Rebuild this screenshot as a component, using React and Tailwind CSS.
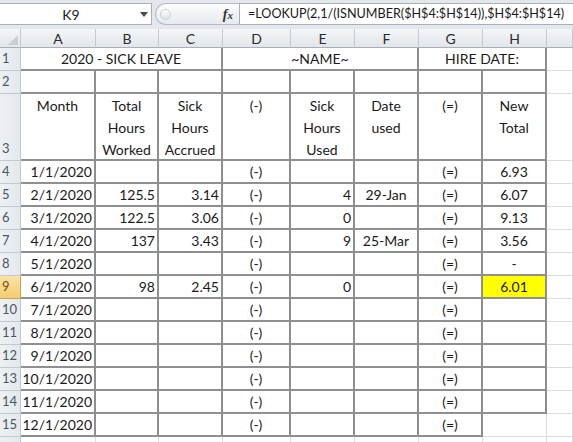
import React from "react";

const TB = "border-r-2 border-b-2 border-[#8f8f8f]";
const GL = "border-r border-b border-[#dadcdd]";

const rows = [
  { a: "1/1/2020", b: "", c: "", e: "", f: "", h: "6.93" },
  { a: "2/1/2020", b: "125.5", c: "3.14", e: "4", f: "29-Jan", h: "6.07" },
  { a: "3/1/2020", b: "122.5", c: "3.06", e: "0", f: "", h: "9.13" },
  { a: "4/1/2020", b: "137", c: "3.43", e: "9", f: "25-Mar", h: "3.56" },
  { a: "5/1/2020", b: "", c: "", e: "", f: "", h: "-" },
  { a: "6/1/2020", b: "98", c: "2.45", e: "0", f: "", h: "6.01", hl: true },
  { a: "7/1/2020", b: "", c: "", e: "", f: "", h: "" },
  { a: "8/1/2020", b: "", c: "", e: "", f: "", h: "" },
  { a: "9/1/2020", b: "", c: "", e: "", f: "", h: "" },
  { a: "10/1/2020", b: "", c: "", e: "", f: "", h: "" },
  { a: "11/1/2020", b: "", c: "", e: "", f: "", h: "" },
  { a: "12/1/2020", b: "", c: "", e: "", f: "", h: "", last: true },
];

function RowHead({ n, active, bottom }) {
  return (
    <div
      className={`flex ${bottom ? "items-end pb-[2px]" : "items-center"} pl-[2px] text-[13px] border-r border-b ${
        active
          ? "bg-linear-to-b from-[#fbe3a6] to-[#f5cc72] border-[#c9a24e] text-[#7a5200]"
          : "bg-linear-to-r from-[#eef1f4] to-[#e4e8ec] border-[#c3c8ce] text-[#4b5563]"
      }`}
    >
      {n}
    </div>
  );
}

function ColHead({ children }) {
  return (
    <div className="flex items-center justify-center text-[14px] text-[#2b2b2b] bg-linear-to-b from-[#f4f6f8] to-[#e2e6ea] border-r border-b border-r-[#c6cacf] border-b-[#a9afb6]">
      {children}
    </div>
  );
}

function Cell({ b = TB, align = "justify-end", className = "", children }) {
  return (
    <div className={`${b} flex items-center ${align} px-[2px] whitespace-nowrap overflow-hidden ${className}`}>
      {children}
    </div>
  );
}

export default function App() {
  return (
    <div
      className="w-[573px] h-[442px] overflow-hidden bg-white text-[14px] text-[#1a1a1a]"
      style={{ fontFamily: "Lato, 'Open Sans', sans-serif" }}
    >
      {/* formula bar */}
      <div className="h-[29px] bg-[#e4e8ed] flex items-start pt-[3px]">
        <div className="w-[152px] h-[22px] bg-white border border-l-0 border-[#a7afb9] flex items-center">
          <span className="flex-1 text-center pl-[2px]">K9</span>
          <svg width="8" height="5" viewBox="0 0 8 5" className="mr-[3px]">
            <path d="M0 0h8L4 5z" fill="#4a4a4a" />
          </svg>
        </div>
        <div className="ml-[3px] w-[84px] h-[22px] rounded-l-full border border-r-0 border-[#b3bac3] bg-linear-to-b from-[#fbfcfd] to-[#e6eaee] flex items-center">
          <span className="ml-[4px] w-[11px] h-[11px] rounded-full border border-[#c9ced4] bg-linear-to-b from-white to-[#dde2e7]" />
          <span
            className="ml-auto mr-[6px] italic text-[14px] font-semibold text-[#333]"
            style={{ fontFamily: "'Liberation Serif', serif" }}
          >
            f<span className="text-[11px]">x</span>
          </span>
        </div>
        <div className="flex-1 h-[22px] bg-white border border-r-0 border-[#a7afb9] flex items-center pl-[8px] text-[12.6px] whitespace-nowrap overflow-hidden">
          =LOOKUP(2,1/(ISNUMBER($H$4:$H$14)),$H$4:$H$14)
        </div>
      </div>

      {/* sheet */}
      <div className="grid grid-cols-[21px_75px_63px_64px_68px_64px_64px_64px_64px_1fr] grid-rows-[19px_23px_23px_67px_repeat(13,23px)]">
        <div className="relative bg-linear-to-b from-[#f4f6f8] to-[#e2e6ea] border-r border-b border-r-[#c6cacf] border-b-[#a9afb6]">
          <svg width="10" height="10" viewBox="0 0 10 10" className="absolute right-[2px] bottom-[2px]">
            <path d="M10 0V10H0z" fill="#c9ced4" />
          </svg>
        </div>
        {["A", "B", "C", "D", "E", "F", "G", "H", "I"].map((c) => (
          <ColHead key={c}>{c === "I" ? "" : c}</ColHead>
        ))}

        {/* row 1 */}
        <RowHead n="1" />
        <Cell className="col-span-3" align="justify-center">2020 - SICK LEAVE</Cell>
        <Cell className="col-span-3" align="justify-center">~NAME~</Cell>
        <Cell className="col-span-2" align="justify-center">HIRE DATE:</Cell>
        <Cell b={GL} />

        {/* row 2 */}
        <RowHead n="2" />
        {[0, 1, 2, 3, 4, 5, 6, 7].map((i) => (
          <Cell key={i} />
        ))}
        <Cell b={GL} />

        {/* row 3 */}
        <RowHead n="3" bottom />
        {[
          "Month",
          "Total Hours Worked",
          "Sick Hours Accrued",
          "(-)",
          "Sick Hours Used",
          "Date used",
          "(=)",
          "New Total",
        ].map((t, i) => (
          <div key={i} className={`${TB} flex flex-col items-center pt-[1px] leading-[22px] text-center`}>
            {t.split(" ").map((w, j) => (
              <span key={j}>{w}</span>
            ))}
          </div>
        ))}
        <Cell b={GL} />

        {rows.map((r, i) => (
          <React.Fragment key={i}>
            <RowHead n={i + 4} active={r.hl} />
            <Cell>{r.a}</Cell>
            <Cell>{r.b}</Cell>
            <Cell>{r.c}</Cell>
            <Cell align="justify-center">(-)</Cell>
            <Cell>{r.e}</Cell>
            <Cell align="justify-center">{r.f}</Cell>
            <Cell align="justify-center">(=)</Cell>
            {r.last ? (
              <Cell b={GL} />
            ) : (
              <Cell align="justify-center" className={r.hl ? "bg-[#ffff00]" : ""}>
                {r.h}
              </Cell>
            )}
            <Cell b={GL} />
          </React.Fragment>
        ))}

        {/* row 16 (cut off) */}
        <RowHead n="" />
        {[0, 1, 2, 3, 4, 5, 6, 7, 8].map((i) => (
          <Cell key={i} b={GL} />
        ))}
      </div>
    </div>
  );
}
